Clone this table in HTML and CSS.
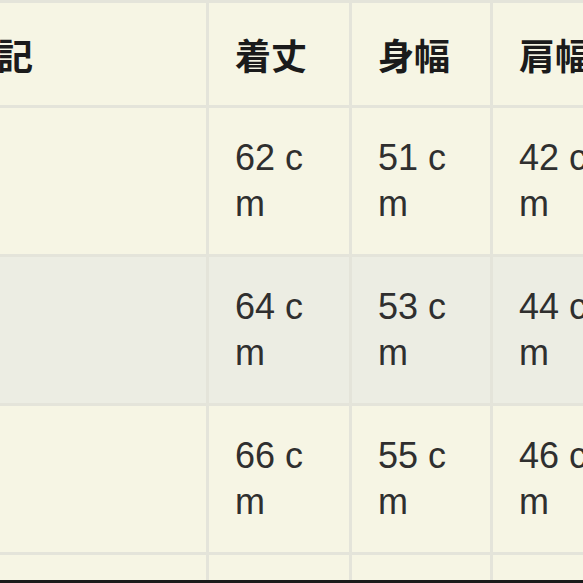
FILE: index.html
```html
<!DOCTYPE html>
<html lang="ja">
<head>
<meta charset="utf-8">
<link rel="stylesheet" href="styles.css">
</head>
<body>
<div class="frame">
  <div class="clip">
    <table class="sizes">
      <thead>
        <tr class="head">
          <th class="c1">表記</th>
          <th class="c2">着丈</th>
          <th class="c3">身幅</th>
          <th class="c4">肩幅</th>
        </tr>
      </thead>
      <tbody>
        <tr class="row">
          <td class="c1"></td>
          <td class="c2">62 cm</td>
          <td class="c3">51 cm</td>
          <td class="c4">42 cm</td>
        </tr>
        <tr class="row alt">
          <td class="c1"></td>
          <td class="c2">64 cm</td>
          <td class="c3">53 cm</td>
          <td class="c4">44 cm</td>
        </tr>
        <tr class="row">
          <td class="c1"></td>
          <td class="c2">66 cm</td>
          <td class="c3">55 cm</td>
          <td class="c4">46 cm</td>
        </tr>
        <tr class="row">
          <td class="c1"></td>
          <td class="c2">68 cm</td>
          <td class="c3">57 cm</td>
          <td class="c4">48 cm</td>
        </tr>
      </tbody>
    </table>
  </div>
  <div class="edge"></div>
</div>
</body>
</html>
```

FILE: styles.css
```css
html, body {
  margin: 0;
  padding: 0;
  background: #f6f5e4;
  overflow: hidden;
}

.frame {
  width: 583px;
  height: 583px;
  display: flex;
  flex-direction: column;
  overflow: hidden;
}

.clip {
  height: 580px;
  overflow: hidden;
  flex: none;
}

.edge {
  height: 3px;
  flex: none;
  background: #1a1a1a;
}

.sizes {
  border-collapse: separate;
  border-spacing: 3px;
  background: #e4e4da;
  table-layout: fixed;
  width: 705px;
  margin-left: -68px;
}

.sizes th,
.sizes td {
  box-sizing: border-box;
  padding: 0 26px;
  vertical-align: middle;
  text-align: left;
  background: #f6f5e4;
  word-break: break-all;
}

.sizes th {
  font-family: "Noto Sans CJK JP", "Noto Sans", sans-serif;
  font-weight: 700;
  font-size: 36px;
  line-height: 46px;
  color: #1b1b1b;
}

.sizes td {
  font-family: "Liberation Sans", Arial, sans-serif;
  font-weight: 400;
  font-size: 36px;
  line-height: 46px;
  color: #2f2f2f;
}

.sizes .c1 { width: 271px; }
.sizes .c2 { width: 140px; }
.sizes .c3 { width: 138px; }
.sizes .c4 { width: 141px; }

.head { height: 102px; }
.row { height: 146px; }

.sizes .alt td { background: #ecede3; }
```
